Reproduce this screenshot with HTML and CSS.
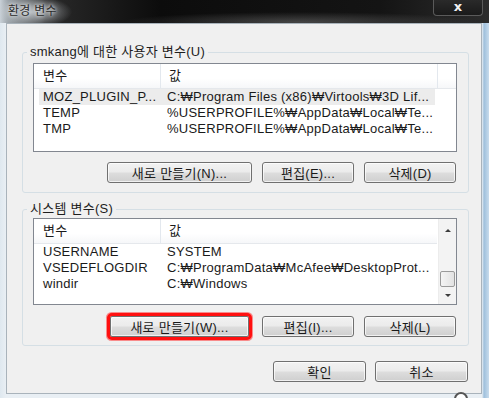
FILE: index.html
```html
<!DOCTYPE html>
<html lang="ko">
<head>
    <meta charset="UTF-8">
    <title>환경 변수</title>
    <link rel="stylesheet" href="styles.css">
</head>
<body>
    <div class="window">
        <div class="titlebar">
            <span class="title">환경 변수</span>
            <span class="close">x</span>
        </div>
        <div class="frame">
            <div class="client">
                <fieldset class="group group-user">
                    <legend>smkang에 대한 사용자 변수(U)</legend>
                    <div class="listview lv-user">
                        <div class="lv-head">
                            <span class="col1">변수</span>
                            <span class="col2">값</span>
                            <span class="col-fill"></span>
                        </div>
                        <div class="lv-row selected"><span class="col1">MOZ_PLUGIN_P...</span><span class="col2">C:₩Program Files (x86)₩Virtools₩3D Lif...</span></div>
                        <div class="lv-row"><span class="col1">TEMP</span><span class="col2">%USERPROFILE%₩AppData₩Local₩Te...</span></div>
                        <div class="lv-row"><span class="col1">TMP</span><span class="col2">%USERPROFILE%₩AppData₩Local₩Te...</span></div>
                    </div>
                    <div class="btn-row">
                        <button class="btn btn-wide">새로 만들기(N)...</button>
                        <button class="btn">편집(E)...</button>
                        <button class="btn">삭제(D)</button>
                    </div>
                </fieldset>

                <fieldset class="group group-system">
                    <legend>시스템 변수(S)</legend>
                    <div class="listview lv-system">
                        <div class="lv-main">
                            <div class="lv-head">
                                <span class="col1">변수</span>
                                <span class="col2">값</span>
                            </div>
                            <div class="lv-row"><span class="col1">USERNAME</span><span class="col2">SYSTEM</span></div>
                            <div class="lv-row"><span class="col1">VSEDEFLOGDIR</span><span class="col2">C:₩ProgramData₩McAfee₩DesktopProt...</span></div>
                            <div class="lv-row"><span class="col1">windir</span><span class="col2">C:₩Windows</span></div>
                        </div>
                        <div class="scrollbar">
                            <span class="arrow up"></span>
                            <span class="thumb"></span>
                            <span class="arrow down"></span>
                        </div>
                    </div>
                    <div class="btn-row">
                        <button class="btn btn-wide highlight">새로 만들기(W)...</button>
                        <button class="btn">편집(I)...</button>
                        <button class="btn">삭제(L)</button>
                    </div>
                </fieldset>

                <div class="dialog-btns">
                    <button class="btn">확인</button>
                    <button class="btn">취소</button>
                </div>
            </div>
        </div>
        <span class="grip"></span>
    </div>
</body>
</html>
```

FILE: styles.css
```css
body {
    margin: 0;
    font-family: "Liberation Sans", "Noto Sans CJK KR", sans-serif;
    font-size: 13px;
    letter-spacing: 0.25px;
    color: #000;
    background: #fff;
}
.window {
    position: relative;
    width: 489px;
    height: 398px;
    overflow: hidden;
    background: linear-gradient(to right, #dfe8ef 0, #e9eff4 6px, #e9eff4 482px, #9fc0dc 484px, #c8dced 489px);
}
.titlebar {
    height: 23px;
    display: flex;
    justify-content: space-between;
    align-items: flex-start;
    background:
        radial-gradient(ellipse 40px 16px at 32px 12px, rgba(200, 205, 210, 0.85), rgba(200, 205, 210, 0) 100%),
        radial-gradient(ellipse 180px 10px at 300px 22px, rgba(120, 120, 120, 0.5), rgba(120, 120, 120, 0) 100%),
        linear-gradient(to right, #c9d1d8 0, #9aa2a8 8px, #2a2a2a 45px, #0c0c0c 160px, #141414 380px, #2c2c2c 489px);
}
.title {
    margin: 4px 0 0 8px;
    line-height: 15px;
    font-size: 12px;
    color: #2a2a2a;
    text-shadow: 0 0 6px #dfe3e6, 0 0 3px #e8ebee;
}
.close {
    width: 48px;
    height: 15px;
    margin-right: 6px;
    border: 1px solid #5a5a5a;
    border-top: none;
    border-radius: 0 0 4px 4px;
    background: linear-gradient(#2a2a2a, #1a1a1a);
    color: #f2f2f2;
    font-family: "DejaVu Sans", sans-serif;
    font-weight: bold;
    font-size: 13px;
    line-height: 13px;
    text-align: center;
}
.frame {
    padding: 0 7px 0 6px;
}
.client {
    height: 369px;
    background: #f0f0f0;
    border: 1px solid #a9b3bb;
}
.group {
    margin: 21px 12px 0 15px;
    padding: 4px 11px 9px 10px;
    border: 1px solid #d5dfe5;
    border-radius: 3px;
    min-width: 0;
}
.group legend {
    margin-left: -6px;
    padding: 0 3px;
    line-height: 14px;
    color: #1e1e1e;
}
.group-system {
    margin-top: 9px;
    padding-top: 2px;
    padding-bottom: 8px;
}
.listview {
    border: 1px solid #828790;
    background: #fff;
    color: #1a1a1a;
}
.lv-user {
    height: 87px;
}
.lv-system {
    height: 85px;
    display: flex;
}
.lv-main {
    flex: 1;
}
.lv-head {
    display: flex;
    height: 24px;
    align-items: center;
    background: linear-gradient(#ffffff, #ffffff 60%, #f6f7f9);
    border-bottom: 1px solid #e5e8ec;
}
.lv-head .col1 {
    width: 117px;
    padding-left: 9px;
    border-right: 1px solid #e3e8ee;
    height: 24px;
    line-height: 24px;
}
.lv-head .col2 {
    width: 268px;
    padding-left: 8px;
    border-right: 1px solid #e3e8ee;
    height: 24px;
    line-height: 24px;
}
.lv-system .lv-head .col2 {
    flex: 1;
    border-right: none;
}
.col-fill {
    flex: 1;
}
.lv-row {
    display: flex;
    height: 16px;
    line-height: 16px;
    white-space: nowrap;
}
.lv-row .col1 {
    width: 118px;
    padding-left: 9px;
}
.lv-row .col2 {
    padding-left: 6px;
}
.lv-row.selected {
    background: #ececec;
    margin: 0 21px 0 5px;
}
.lv-row.selected .col1 {
    padding-left: 4px;
}
.scrollbar {
    width: 17px;
    margin-left: 1px;
    display: flex;
    flex-direction: column;
    align-items: center;
    background: #f3f3f3;
    border-left: 1px solid #ececec;
}
.arrow {
    width: 0;
    height: 0;
    border-left: 3px solid transparent;
    border-right: 3px solid transparent;
}
.arrow.up {
    margin-top: 10px;
    border-bottom: 3px solid #3c3c3c;
}
.arrow.down {
    margin-top: auto;
    margin-bottom: 7px;
    border-top: 3px solid #3c3c3c;
}
.thumb {
    width: 15px;
    height: 16px;
    margin-top: 39px;
    border: 1px solid #9a9a9a;
    border-radius: 2px;
    background: linear-gradient(to right, #f4f4f4, #e2e2e2);
    box-sizing: border-box;
}
.btn-row {
    display: flex;
    justify-content: flex-end;
    gap: 10px;
    margin-top: 10px;
    margin-right: 1px;
}
.group-system .btn-row {
    margin-top: 11px;
}
.btn {
    width: 92px;
    height: 21px;
    padding: 0;
    border: 1px solid #707070;
    border-radius: 3px;
    background: linear-gradient(#f2f2f2 0%, #ebebeb 48%, #dddddd 52%, #cfcfcf 100%);
    font-family: inherit;
    font-size: 13px;
    letter-spacing: 0.25px;
    color: #1a1a1a;
    box-shadow: inset 0 0 0 1px rgba(255, 255, 255, 0.7);
}
.btn-wide {
    width: 145px;
}
.btn.highlight {
    width: 139px;
    margin-right: 3px;
    outline: 3px solid #ff1010;
    outline-offset: 0;
    border-radius: 2px;
    box-shadow: inset 0 0 0 1px rgba(255, 255, 255, 0.7), 0 0 0 4px rgba(255, 40, 40, 0.5);
}
.dialog-btns {
    display: flex;
    justify-content: flex-end;
    gap: 9px;
    margin: 15px 13px 0 0;
}
.dialog-btns .btn {
    width: 93px;
}
.grip {
    position: absolute;
    left: 454px;
    top: 392px;
    width: 10px;
    height: 10px;
    border: 2px solid #555;
    border-radius: 50%;
    background: #fff;
}
```
